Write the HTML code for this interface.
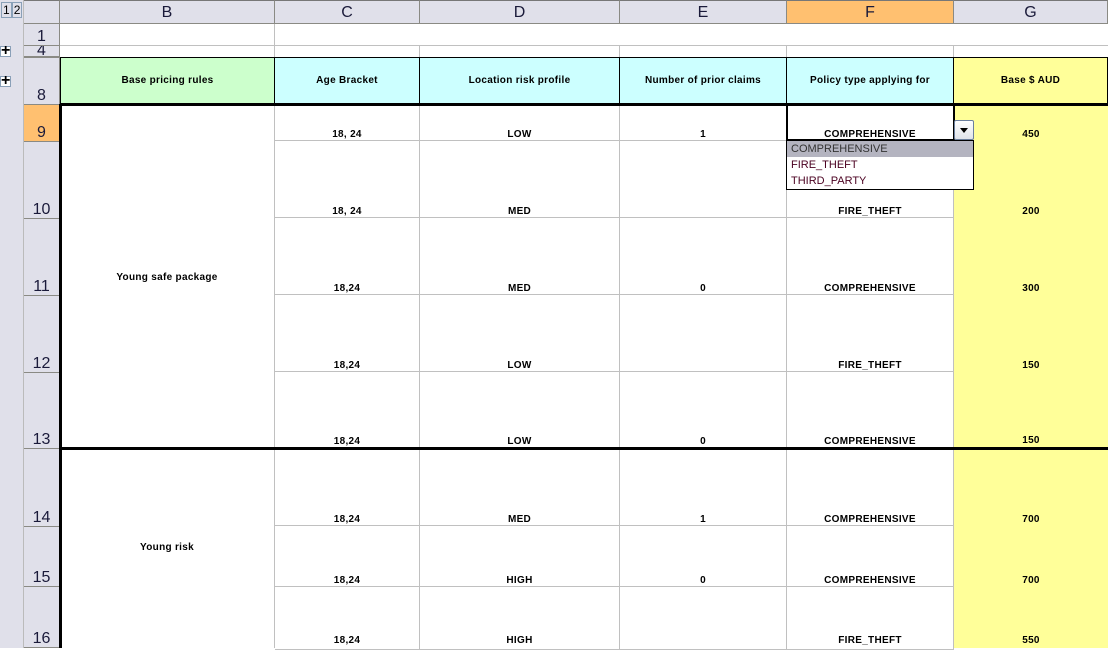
<!DOCTYPE html>
<html><head><meta charset="utf-8"><style>
*{margin:0;padding:0;box-sizing:border-box}
body{width:1108px;height:648px;overflow:hidden;background:#fff;position:relative;font-family:"Liberation Sans",Arial,sans-serif}
.a{position:absolute}
.hd{background:#e0e0ea;border-right:1px solid #8a8a84;border-bottom:1px solid #8a8a84;color:#1a1a3a;font-size:16px;text-align:center}
.ch{top:0;height:24px;line-height:24px;border-top:1px solid #777}
.rh{left:24px;width:36px;display:flex;align-items:flex-end;justify-content:center;padding-bottom:0;line-height:17px}
.c{display:flex;align-items:flex-end;justify-content:center;font-size:10px;letter-spacing:0.3px;font-weight:bold;padding-bottom:0;border-right:1px solid #c0c0c0;border-bottom:1px solid #c0c0c0;color:#000}
.g{border-right:none;border-bottom:1px solid transparent}
.h{font-size:10px;letter-spacing:0.3px;font-weight:bold;display:flex;align-items:center;justify-content:center;border:1px solid #000;border-left:none;top:57px;height:47px}
.pl{width:11px;height:11px;border:1px solid #8aa0b8;background:#fff;font-size:16px;line-height:8px;text-align:center;font-weight:bold;left:0px}
</style></head><body>
<div class="a" style="left:0;top:0;width:24px;height:648px;background:#e0e0ea;border-right:1px solid #bbb"></div>
<div class="a" style="left:1px;top:4px;font-size:12px;line-height:13px"><span style="border:1px solid #8aa0b8;padding:0 1px">1</span><span style="border:1px solid #8aa0b8;padding:0 1px">2</span></div>
<div class="a pl" style="top:46px">+</div>
<div class="a pl" style="top:76px">+</div>
<div class="a hd" style="left:24px;top:0;width:36px;height:24px;border-top:1px solid #777"></div>
<div class="a hd ch" style="left:59px;width:216px;border-left:1px solid #8a8a84">B</div>
<div class="a hd ch" style="left:275px;width:145px">C</div>
<div class="a hd ch" style="left:420px;width:200px">D</div>
<div class="a hd ch" style="left:620px;width:167px">E</div>
<div class="a hd ch" style="left:787px;width:167px;background:#ffc070">F</div>
<div class="a hd ch" style="left:954px;width:154px">G</div>
<div class="a hd rh" style="top:24px;height:22px">1</div>
<div class="a hd rh" style="top:46px;height:12px;line-height:10px;overflow:hidden;align-items:flex-start;border-bottom:2px solid #8a8a84">4</div>
<div class="a hd rh" style="top:58px;height:47px">8</div>
<div class="a hd rh" style="top:105px;height:37px;background:#ffc070">9</div>
<div class="a hd rh" style="top:142px;height:77px">10</div>
<div class="a hd rh" style="top:219px;height:77px">11</div>
<div class="a hd rh" style="top:296px;height:77px">12</div>
<div class="a hd rh" style="top:373px;height:76px">13</div>
<div class="a hd rh" style="top:449px;height:78px">14</div>
<div class="a hd rh" style="top:527px;height:60px">15</div>
<div class="a hd rh" style="top:587px;height:61px">16</div>
<div class="a" style="left:60px;top:24px;width:215px;height:22px;border-right:1px solid #c0c0c0;border-bottom:1px solid #c0c0c0"></div>
<div class="a" style="left:275px;top:24px;width:833px;height:22px;border-bottom:1px solid #c0c0c0"></div>
<div class="a" style="left:60px;top:46px;width:215px;height:11px;border-right:1px solid #c0c0c0"></div>
<div class="a" style="left:275px;top:46px;width:145px;height:11px;border-right:1px solid #c0c0c0"></div>
<div class="a" style="left:420px;top:46px;width:200px;height:11px;border-right:1px solid #c0c0c0"></div>
<div class="a" style="left:620px;top:46px;width:167px;height:11px;border-right:1px solid #c0c0c0"></div>
<div class="a" style="left:787px;top:46px;width:167px;height:11px;border-right:1px solid #c0c0c0"></div>
<div class="a h" style="left:60px;width:215px;background:#ccffcc;border-left:1px solid #000">Base pricing rules</div>
<div class="a h" style="left:275px;width:145px;background:#ccffff">Age Bracket</div>
<div class="a h" style="left:420px;width:200px;background:#ccffff">Location risk profile</div>
<div class="a h" style="left:620px;width:167px;background:#ccffff">Number of prior claims</div>
<div class="a h" style="left:787px;width:167px;background:#ccffff">Policy type applying for</div>
<div class="a h" style="left:954px;width:154px;background:#ffff99">Base $ AUD</div>
<div class="a" style="left:954px;top:104px;width:154px;height:544px;background:#ffff99"></div>
<div class="a" style="left:60px;top:104px;width:215px;height:345px;border-right:1px solid #c0c0c0;display:flex;align-items:center;justify-content:center;font-size:10px;letter-spacing:0.3px;font-weight:bold;padding-top:2px">Young safe package</div>
<div class="a" style="left:60px;top:449px;width:215px;height:199px;border-right:1px solid #c0c0c0;font-size:10px;letter-spacing:0.3px;font-weight:bold;text-align:center;padding-top:93px">Young risk</div>

<div class="a c" style="left:275px;top:104px;width:145px;height:37px">18, 24</div>
<div class="a c" style="left:420px;top:104px;width:200px;height:37px">LOW</div>
<div class="a c" style="left:620px;top:104px;width:167px;height:37px">1</div>
<div class="a c" style="left:787px;top:104px;width:167px;height:37px">COMPREHENSIVE</div>
<div class="a c g" style="left:954px;top:104px;width:154px;height:37px">450</div>

<div class="a c" style="left:275px;top:141px;width:145px;height:77px">18, 24</div>
<div class="a c" style="left:420px;top:141px;width:200px;height:77px">MED</div>
<div class="a c" style="left:620px;top:141px;width:167px;height:77px"></div>
<div class="a c" style="left:787px;top:141px;width:167px;height:77px">FIRE_THEFT</div>
<div class="a c g" style="left:954px;top:141px;width:154px;height:77px">200</div>

<div class="a c" style="left:275px;top:218px;width:145px;height:77px">18,24</div>
<div class="a c" style="left:420px;top:218px;width:200px;height:77px">MED</div>
<div class="a c" style="left:620px;top:218px;width:167px;height:77px">0</div>
<div class="a c" style="left:787px;top:218px;width:167px;height:77px">COMPREHENSIVE</div>
<div class="a c g" style="left:954px;top:218px;width:154px;height:77px">300</div>

<div class="a c" style="left:275px;top:295px;width:145px;height:77px">18,24</div>
<div class="a c" style="left:420px;top:295px;width:200px;height:77px">LOW</div>
<div class="a c" style="left:620px;top:295px;width:167px;height:77px"></div>
<div class="a c" style="left:787px;top:295px;width:167px;height:77px">FIRE_THEFT</div>
<div class="a c g" style="left:954px;top:295px;width:154px;height:77px">150</div>

<div class="a c" style="left:275px;top:372px;width:145px;height:76px">18,24</div>
<div class="a c" style="left:420px;top:372px;width:200px;height:76px">LOW</div>
<div class="a c" style="left:620px;top:372px;width:167px;height:76px">0</div>
<div class="a c" style="left:787px;top:372px;width:167px;height:76px">COMPREHENSIVE</div>
<div class="a c g" style="left:954px;top:372px;width:154px;height:75px">150</div>

<div class="a c" style="left:275px;top:449px;width:145px;height:77px">18,24</div>
<div class="a c" style="left:420px;top:449px;width:200px;height:77px">MED</div>
<div class="a c" style="left:620px;top:449px;width:167px;height:77px">1</div>
<div class="a c" style="left:787px;top:449px;width:167px;height:77px">COMPREHENSIVE</div>
<div class="a c g" style="left:954px;top:449px;width:154px;height:77px">700</div>

<div class="a c" style="left:275px;top:526px;width:145px;height:61px">18,24</div>
<div class="a c" style="left:420px;top:526px;width:200px;height:61px">HIGH</div>
<div class="a c" style="left:620px;top:526px;width:167px;height:61px">0</div>
<div class="a c" style="left:787px;top:526px;width:167px;height:61px">COMPREHENSIVE</div>
<div class="a c g" style="left:954px;top:526px;width:154px;height:61px">700</div>

<div class="a c" style="left:275px;top:587px;width:145px;height:63px;padding-bottom:3px">18,24</div>
<div class="a c" style="left:420px;top:587px;width:200px;height:63px;padding-bottom:3px">HIGH</div>
<div class="a c" style="left:620px;top:587px;width:167px;height:63px;padding-bottom:3px"></div>
<div class="a c" style="left:787px;top:587px;width:167px;height:63px;padding-bottom:3px">FIRE_THEFT</div>
<div class="a c g" style="left:954px;top:587px;width:154px;height:63px;padding-bottom:3px">550</div>

<div class="a" style="left:60px;top:103px;width:1048px;height:3px;background:#000"></div>
<div class="a" style="left:59px;top:104px;width:3px;height:544px;background:#000"></div>
<div class="a" style="left:60px;top:447px;width:1048px;height:3px;background:#000"></div>

<div class="a" style="left:786px;top:105px;width:169px;height:36px;border:2px solid #000;border-top:1px solid #000"></div>
<div class="a" style="left:954px;top:120px;width:20px;height:20px;background:linear-gradient(#fff,#dfe3ea);border:1px solid #6b7f9e;border-radius:2px"><div class="a" style="left:5px;top:7px;width:0;height:0;border-left:4px solid transparent;border-right:4px solid transparent;border-top:5px solid #000"></div></div>
<div class="a" style="left:786px;top:140px;width:188px;height:50px;background:#fff;border:1px solid #000;font-size:11px;line-height:16px;color:#1a1a4a">
<div style="background:#b4b4c0;padding-left:4px;color:#333">COMPREHENSIVE</div>
<div style="padding-left:4px;color:#4a0020">FIRE_THEFT</div>
<div style="padding-left:4px;color:#4a0020">THIRD_PARTY</div>
</div>
</body></html>
